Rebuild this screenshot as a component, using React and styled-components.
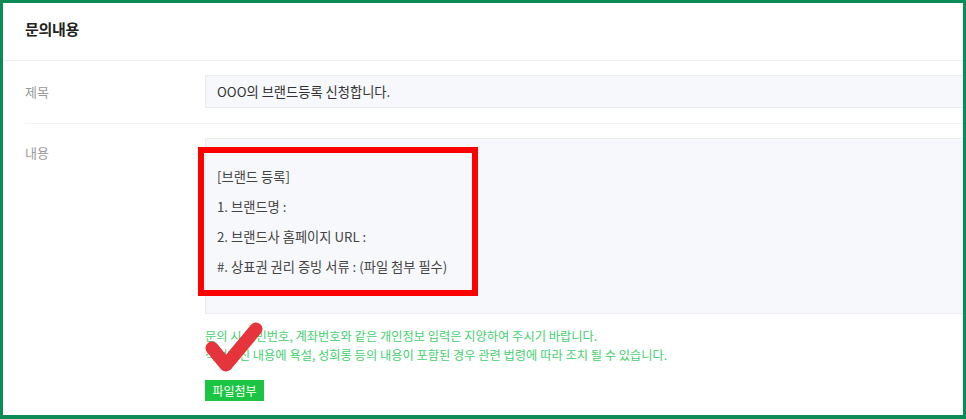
import React from 'react'
import styled, { createGlobalStyle } from 'styled-components'

const GlobalStyle = createGlobalStyle`
    html, body {
        margin: 0;
        padding: 0;
        background: #fff;
    }
    body {
        font-family: "Noto Sans CJK KR", "Noto Sans", sans-serif;
    }
    * {
        box-sizing: border-box;
    }
`

const Frame = styled.div`
    width: 966px;
    height: 419px;
    border: 3px solid #0b8c56;
    border-bottom-width: 4px;
    background: #fff;
    display: flex;
    flex-direction: column;
    overflow: hidden;
`
const Header = styled.div`
    height: 58px;
    flex-shrink: 0;
    display: flex;
    align-items: center;
    padding: 0 0 6px 22px;
    border-bottom: 1px solid #eeeff1;
`
const Title = styled.h2`
    margin: 0;
    font-size: 15px;
    font-weight: 700;
    color: #222;
    letter-spacing: -0.3px;
`
const Body = styled.div`
    padding-left: 22px;
    display: flex;
    flex-direction: column;
`
const Row = styled.div`
    display: flex;
    padding: 14px 0 ${p => (p.last ? '0' : '15px')};
    border-bottom: ${p => (p.last ? 'none' : '1px solid #f1f2f4')};
`
const Label = styled.div`
    width: 180px;
    flex-shrink: 0;
    font-size: 13px;
    color: #9a9a9a;
    line-height: 20px;
    padding-top: ${p => p.top}px;
`
const Field = styled.div`
    flex: 1;
    position: relative;
    display: flex;
    flex-direction: column;
`
const Input = styled.div`
    height: 33px;
    background: #f7f8fb;
    border: 1px solid #ebecef;
    border-right: none;
    display: flex;
    align-items: center;
    padding-left: 11px;
    font-size: 13.25px;
    color: #333;
`
const TextBox = styled.div`
    position: relative;
    height: 176px;
    background: #f7f8fb;
    border: 1px solid #ebecef;
    border-right: none;
    padding: 23px 0 0 11px;
`
const TextLine = styled.p`
    margin: 0;
    font-size: 13.25px;
    line-height: 30px;
    color: #444;
`
const Highlight = styled.div`
    position: absolute;
    left: -8px;
    top: 8px;
    width: 280px;
    height: 149px;
    border: 6px solid #ff0000;
    pointer-events: none;
`
const Notice = styled.div`
    margin-top: 13px;
    font-size: 12.25px;
    line-height: 19px;
    color: #45cf70;
`
const AttachButton = styled.button`
    margin-top: 15px;
    align-self: flex-start;
    height: 21px;
    width: 59px;
    padding: 0;
    border: none;
    background: #1bc443;
    color: #fff;
    font-family: inherit;
    font-size: 12px;
    line-height: 21px;
`
const Check = styled.svg`
    position: absolute;
    left: -4px;
    top: 178px;
    pointer-events: none;
`

function App() {
    return (
        <>
            <GlobalStyle />
            <Frame>
                <Header>
                    <Title>문의내용</Title>
                </Header>
                <Body>
                    <Row>
                        <Label top={7}>제목</Label>
                        <Field>
                            <Input>OOO의 브랜드등록 신청합니다.</Input>
                        </Field>
                    </Row>
                    <Row last>
                        <Label top={5}>내용</Label>
                        <Field>
                            <TextBox>
                                <TextLine>[브랜드 등록]</TextLine>
                                <TextLine>1. 브랜드명 :</TextLine>
                                <TextLine>2. 브랜드사 홈페이지 URL :</TextLine>
                                <TextLine>#. 상표권 권리 증빙 서류 : (파일 첨부 필수)</TextLine>
                                <Highlight />
                            </TextBox>
                            <Notice>
                                <div>문의 시 주민번호, 계좌번호와 같은 개인정보 입력은 지양하여 주시기 바랍니다.</div>
                                <div>작성하신 내용에 욕설, 성희롱 등의 내용이 포함된 경우 관련 법령에 따라 조치 될 수 있습니다.</div>
                            </Notice>
                            <AttachButton>파일첨부</AttachButton>
                            <Check width="70" height="62" viewBox="0 0 70 62">
                                <polyline
                                    points="11,32 25,49 55,13"
                                    fill="none"
                                    stroke="#e5343b"
                                    strokeWidth="13"
                                    strokeLinecap="round"
                                    strokeLinejoin="round"
                                />
                            </Check>
                        </Field>
                    </Row>
                </Body>
            </Frame>
        </>
    )
}

export default App
